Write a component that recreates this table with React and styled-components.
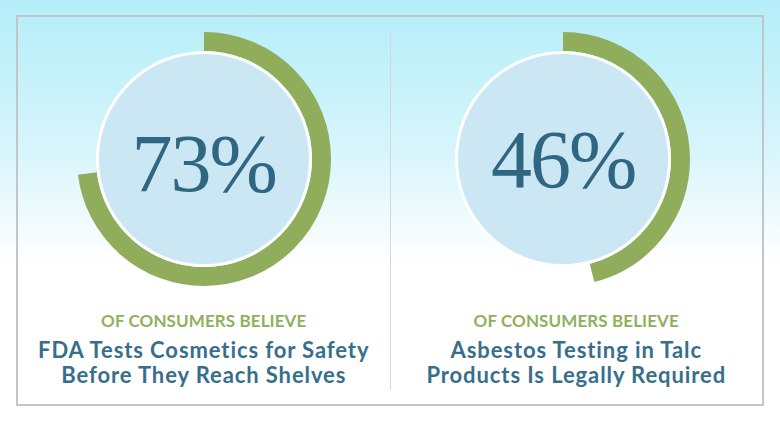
import React from "react";
import styled, { createGlobalStyle } from "styled-components";

const GlobalStyle = createGlobalStyle`
  html, body {
    margin: 0;
    padding: 0;
  }
  body {
    width: 780px;
    height: 424px;
    overflow: hidden;
    background: linear-gradient(180deg, #b4eef9 0%, #d6f5fb 35%, #ffffff 62%, #ffffff 100%);
    font-family: Lato, "Open Sans", sans-serif;
  }
`;

const Page = styled.div`
  box-sizing: border-box;
  width: 780px;
  height: 424px;
  padding: 15px 16px 18px 16px;
`;

const Frame = styled.div`
  box-sizing: border-box;
  height: 100%;
  border: 2px solid #c3c6c8;
  display: grid;
  grid-template-columns: 1fr 1px 1fr;
`;

const Divider = styled.div`
  background: #d3d8da;
  margin: 14px 0 14px;
`;

const Column = styled.div`
  display: flex;
  flex-direction: column;
  align-items: center;
  padding-top: 14px;
`;

const Dial = styled.div`
  display: grid;
  place-items: center;
  width: 256px;
  height: 256px;
  margin-right: ${(p) => p.$shift * 2}px;

  & > * {
    grid-area: 1 / 1;
  }
`;

const Number = styled.div`
  font-family: "Liberation Serif", "Times New Roman", serif;
  font-size: 82px;
  line-height: 1;
  color: #2f6782;
  letter-spacing: -2px;
  padding-top: ${(p) => p.$drop}px;
`;

const Label = styled.div`
  margin-top: 23px;
  font-size: 17px;
  font-weight: 700;
  color: #90b05c;
  letter-spacing: 0.1px;
`;

const Claim = styled.div`
  margin-top: 6px;
  font-size: 22px;
  font-weight: 700;
  line-height: 25px;
  letter-spacing: 0.9px;
  color: #376f8b;
  text-align: center;
`;

const Ring = ({ value }) => {
  const r = 117.5;
  const c = 2 * Math.PI * r;
  return (
    <svg width="256" height="256" viewBox="0 0 256 256">
      <circle
        cx="128"
        cy="128"
        r={r}
        fill="none"
        stroke="#90ad5b"
        strokeWidth="19"
        strokeDasharray={`${(c * value) / 100} ${c}`}
        transform="rotate(-90 128 128)"
      />
      <circle cx="128" cy="128" r="106.5" fill="#cbe7f4" stroke="#ffffff" strokeWidth="3" />
    </svg>
  );
};

const stats = [
  { value: 73, shift: 0, drop: 10, lines: ["FDA Tests Cosmetics for Safety", "Before They Reach Shelves"] },
  { value: 46, shift: 13, drop: 2, lines: ["Asbestos Testing in Talc", "Products Is Legally Required"] },
];

const Stat = ({ value, shift, drop, lines }) => (
  <Column>
    <Dial $shift={shift}>
      <Ring value={value} />
      <Number $drop={drop}>{value}%</Number>
    </Dial>
    <Label>OF CONSUMERS BELIEVE</Label>
    <Claim>
      {lines[0]}
      <br />
      {lines[1]}
    </Claim>
  </Column>
);

const App = () => {
  return (
    <Page>
      <GlobalStyle />
      <Frame>
        <Stat {...stats[0]} />
        <Divider />
        <Stat {...stats[1]} />
      </Frame>
    </Page>
  );
};

export default App;
